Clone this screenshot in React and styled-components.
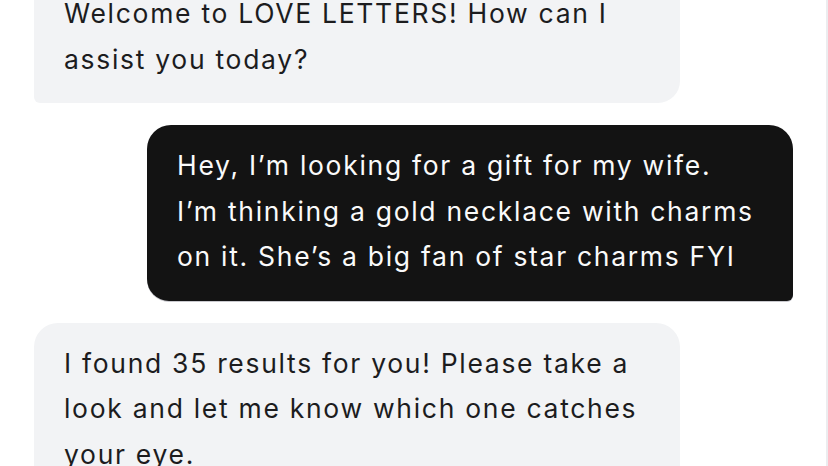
import React from "react";
import styled, { createGlobalStyle } from "styled-components";

const GlobalStyle = createGlobalStyle`
  html, body {
    margin: 0;
    padding: 0;
    background: #fff;
    overflow: hidden;
  }
  body {
    font-family: Inter, "Noto Sans", "Liberation Sans", sans-serif;
    -webkit-font-smoothing: antialiased;
  }
`;

const Screen = styled.div`
  box-sizing: border-box;
  width: 100%;
  height: 466px;
  overflow: hidden;
  border-right: 2px solid #ececef;
  padding: 0 33px 0 34px;
`;

const Thread = styled.div`
  display: flex;
  flex-direction: column;
  gap: 22px;
  margin-top: -27px;
`;

const Bubble = styled.div`
  box-sizing: border-box;
  width: 646px;
  padding: 18px 30px 21px;
  font-size: 26.5px;
  line-height: 45.5px;
  letter-spacing: 1.7px;
  white-space: nowrap;
  align-self: ${(p) => (p.$mine ? "flex-end" : "flex-start")};
  background: ${(p) => (p.$mine ? "#131313" : "#f2f3f5")};
  color: ${(p) => (p.$mine ? "#fafafa" : "#1c1c1e")};
  border-radius: ${(p) => (p.$mine ? "24px 24px 6px 22px" : "24px 24px 22px 6px")};
  box-shadow: ${(p) => (p.$mine ? "0 1px 0 #c9c9ce" : "none")};
`;

const Line = styled.span`
  display: block;
`;

const messages = [
  { mine: false, lines: ["Welcome to LOVE LETTERS! How can I", "assist you today?"] },
  {
    mine: true,
    lines: [
      "Hey, I\u2019m looking for a gift for my wife.",
      "I\u2019m thinking a gold necklace with charms",
      "on it. She\u2019s a big fan of star charms FYI",
    ],
  },
  {
    mine: false,
    lines: [
      "I found 35 results for you! Please take a",
      "look and let me know which one catches",
      "your eye.",
    ],
  },
];

export default function App() {
  return (
    <>
      <GlobalStyle />
      <Screen>
        <Thread>
          {messages.map((m, i) => (
            <Bubble key={i} $mine={m.mine}>
              {m.lines.map((l, j) => (
                <Line key={j}>{l}</Line>
              ))}
            </Bubble>
          ))}
        </Thread>
      </Screen>
    </>
  );
}
